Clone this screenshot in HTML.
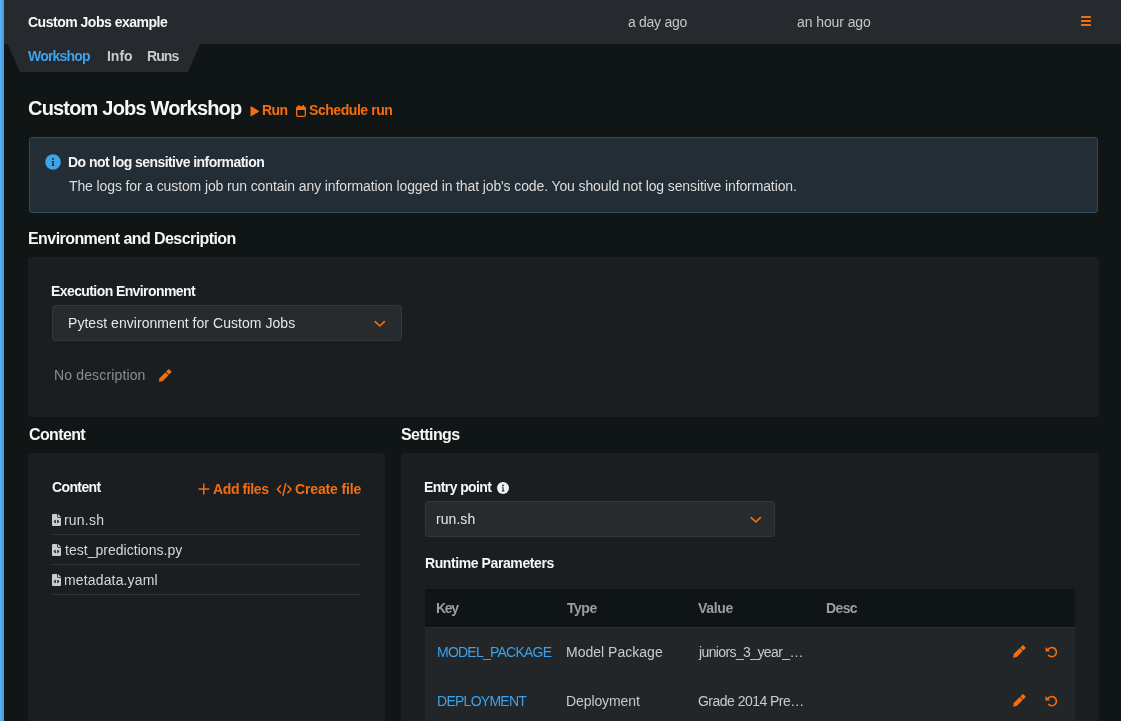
<!DOCTYPE html>
<html><head><meta charset="utf-8"><style>
*{margin:0;padding:0;box-sizing:border-box}
html,body{width:1121px;height:721px;overflow:hidden;background:#101516;font-family:"Liberation Sans",sans-serif;color:#fff}
.t{position:absolute;white-space:nowrap;line-height:normal;will-change:transform}
.abs{position:absolute}
.b{font-weight:bold}
</style></head><body>
<div class="abs" style="left:0;top:0;width:4px;height:721px;background:linear-gradient(to right,#66b7f1,#46a4ea 45%,#3e9fe7)"></div>
<div class="abs" style="left:4px;top:0;width:1117px;height:44px;background:#262a2e"></div>
<div class="abs" style="left:4px;top:44px;width:200px;height:28px;background:#262a2e;clip-path:polygon(3.5px 0,196px 0,184px 28px,16px 28px)"></div>
<svg class="abs" style="left:1081px;top:16px" width="10" height="10"><rect x="0" y="0" width="10" height="2" rx="0.6" fill="#f46d0e"/><rect x="0" y="4" width="10" height="2" rx="0.6" fill="#f46d0e"/><rect x="0" y="8" width="10" height="2" rx="0.6" fill="#f46d0e"/></svg>
<svg class="abs" style="left:250px;top:106px" width="10" height="11"><path d="M0.5 1.2 Q0.5 0 1.6 0.6 L8.6 4.7 Q9.5 5.3 8.6 5.9 L1.6 10 Q0.5 10.6 0.5 9.4 Z" fill="#f46d0e"/></svg>
<svg class="abs" style="left:296px;top:105px" width="11" height="12"><path d="M2.7 0.3 v2.2 M7.3 0.3 v2.2" stroke="#f46d0e" stroke-width="1.5" stroke-linecap="round"/><rect x="0.65" y="1.9" width="8.7" height="9.45" rx="1.4" fill="none" stroke="#f46d0e" stroke-width="1.3"/><rect x="0.65" y="1.9" width="8.7" height="3" rx="1" fill="#f46d0e"/></svg>
<div class="abs" style="left:29px;top:137px;width:1069px;height:76px;background:#232d35;border:1px solid #2b4b62;border-radius:3px"></div>
<svg class="abs" style="left:45px;top:154px" width="16" height="16"><circle cx="8" cy="8" r="7.8" fill="#3fa3ea"/><circle cx="8" cy="4.9" r="0.95" fill="#11181d"/><path d="M6.9 7 H8.6 V10.9 H9.4 V11.8 H6.6 V10.9 H7.4 V7.8 H6.9Z" fill="#11181d"/></svg>
<div class="abs" style="left:28px;top:257px;width:1071px;height:160px;background:#1b1e20;border-radius:3px"></div>
<div class="abs" style="left:52px;top:305px;width:350px;height:36px;background:#272b2e;border:1px solid #32373a;border-radius:3px"></div>
<svg class="abs" style="left:374px;top:319px" width="12" height="10"><path d="M1.2 2.6 L5.8 7 L10.4 2.6" fill="none" stroke="#f46d0e" stroke-width="1.7" stroke-linecap="round" stroke-linejoin="round"/></svg>
<svg class="abs" style="left:157px;top:369px" width="15" height="15"><g transform="translate(1.9,12.8) rotate(-45)"><path d="M0 0 L3 -2.15 H11.5 V2.15 H3Z" fill="#f46d0e"/><rect x="12.2" y="-2.15" width="3.9" height="4.3" rx="0.9" fill="#f46d0e"/></g></svg>
<div class="abs" style="left:28px;top:453px;width:357px;height:278px;background:#1b1e20;border-radius:3px"></div>
<svg class="abs" style="left:198px;top:483px" width="12" height="12"><path d="M5.8 1 V11 M1 5.9 H10.8" stroke="#f46d0e" stroke-width="1.5" stroke-linecap="round"/></svg>
<svg class="abs" style="left:276px;top:483px" width="17" height="13"><path d="M4.6 2.8 L1.4 6.3 L4.6 9.8 M11.8 2.8 L15 6.3 L11.8 9.8 M9.7 0.6 L7.1 12.2" fill="none" stroke="#f46d0e" stroke-width="1.5" stroke-linecap="round" stroke-linejoin="round"/></svg>
<svg class="abs" style="left:52px;top:514px" width="9" height="12"><path d="M1 0 H5.2 V2.8 Q5.2 3.8 6.2 3.8 H9 V11 Q9 12 8 12 H1 Q0 12 0 11 V1 Q0 0 1 0Z M6 0 L9 3 H6Z" fill="#c9cbcc"/><path d="M3.7 6.3 L2.5 7.5 L3.7 8.7 M5.3 6.3 L6.5 7.5 L5.3 8.7" fill="none" stroke="#1b1e20" stroke-width="1.3"/></svg>
<div class="abs" style="left:52px;top:534px;width:309px;height:1px;background:#303336"></div>
<svg class="abs" style="left:52px;top:544px" width="9" height="12"><path d="M1 0 H5.2 V2.8 Q5.2 3.8 6.2 3.8 H9 V11 Q9 12 8 12 H1 Q0 12 0 11 V1 Q0 0 1 0Z M6 0 L9 3 H6Z" fill="#c9cbcc"/><path d="M3.7 6.3 L2.5 7.5 L3.7 8.7 M5.3 6.3 L6.5 7.5 L5.3 8.7" fill="none" stroke="#1b1e20" stroke-width="1.3"/></svg>
<div class="abs" style="left:52px;top:564px;width:309px;height:1px;background:#303336"></div>
<svg class="abs" style="left:52px;top:574px" width="9" height="12"><path d="M1 0 H5.2 V2.8 Q5.2 3.8 6.2 3.8 H9 V11 Q9 12 8 12 H1 Q0 12 0 11 V1 Q0 0 1 0Z M6 0 L9 3 H6Z" fill="#c9cbcc"/><path d="M3.7 6.3 L2.5 7.5 L3.7 8.7 M5.3 6.3 L6.5 7.5 L5.3 8.7" fill="none" stroke="#1b1e20" stroke-width="1.3"/></svg>
<div class="abs" style="left:52px;top:594px;width:309px;height:1px;background:#303336"></div>
<div class="abs" style="left:401px;top:453px;width:698px;height:278px;background:#1b1e20;border-radius:3px"></div>
<svg class="abs" style="left:497px;top:482px" width="12" height="12"><circle cx="6" cy="6" r="6" fill="#f2f2f2"/><circle cx="6" cy="3.4" r="0.9" fill="#1b1e20"/><path d="M4.9 5.2 H6.6 V8.6 H7.4 V9.4 H4.8 V8.6 H5.5 V6 H4.9Z" fill="#1b1e20"/></svg>
<div class="abs" style="left:425px;top:501px;width:350px;height:36px;background:#272b2e;border:1px solid #32373a;border-radius:3px"></div>
<svg class="abs" style="left:750px;top:515px" width="12" height="10"><path d="M1.2 2.6 L5.8 7 L10.4 2.6" fill="none" stroke="#f46d0e" stroke-width="1.7" stroke-linecap="round" stroke-linejoin="round"/></svg>
<div class="abs" style="left:425px;top:589px;width:650px;height:38px;background:#0f1415"></div>
<div class="abs" style="left:425px;top:627px;width:650px;height:94px;background:#222629;border-top:1px solid #2a2e31"></div>
<svg class="abs" style="left:1011px;top:645px" width="15" height="15"><g transform="translate(2.1,12.7) rotate(-45)"><path d="M0 0 L3 -2.15 H11.5 V2.15 H3Z" fill="#f46d0e"/><rect x="12.2" y="-2.15" width="3.9" height="4.3" rx="0.9" fill="#f46d0e"/></g></svg>
<svg class="abs" style="left:1045px;top:646px" width="13" height="12"><path d="M2.6 4.2 A4.6 4.6 0 1 1 3.2 9" fill="none" stroke="#f46d0e" stroke-width="1.6"/><path d="M0.5 1 V5.5 H5Z" fill="#f46d0e"/></svg>
<svg class="abs" style="left:1011px;top:694px" width="15" height="15"><g transform="translate(2.1,12.7) rotate(-45)"><path d="M0 0 L3 -2.15 H11.5 V2.15 H3Z" fill="#f46d0e"/><rect x="12.2" y="-2.15" width="3.9" height="4.3" rx="0.9" fill="#f46d0e"/></g></svg>
<svg class="abs" style="left:1045px;top:695px" width="13" height="12"><path d="M2.6 4.2 A4.6 4.6 0 1 1 3.2 9" fill="none" stroke="#f46d0e" stroke-width="1.6"/><path d="M0.5 1 V5.5 H5Z" fill="#f46d0e"/></svg>

<div class="t b" id="t0" style="left:28.20px;top:14px;font-size:14px;color:#f7f7f7;letter-spacing:-0.489px">Custom Jobs example</div>
<div class="t" id="t1" style="left:628.20px;top:14px;font-size:14px;color:#c4c6c8;letter-spacing:-0.288px">a day ago</div>
<div class="t" id="t2" style="left:797.00px;top:14px;font-size:14px;color:#c4c6c8;letter-spacing:-0.090px">an hour ago</div>
<div class="t b" id="t3" style="left:28.20px;top:48px;font-size:14px;color:#3ea2ea;letter-spacing:-0.800px">Workshop</div>
<div class="t b" id="t4" style="left:106.80px;top:48px;font-size:14px;color:#c9cacb;letter-spacing:-0.033px">Info</div>
<div class="t b" id="t5" style="left:147.20px;top:48px;font-size:14px;color:#c9cacb;letter-spacing:-0.933px">Runs</div>
<div class="t b" id="t6" style="left:27.60px;top:97px;font-size:20px;color:#f7f7f7;letter-spacing:-0.811px">Custom Jobs Workshop</div>
<div class="t b" id="t7" style="left:262.00px;top:102px;font-size:14px;color:#f46d0e;letter-spacing:-0.550px">Run</div>
<div class="t b" id="t8" style="left:309.20px;top:102px;font-size:14px;color:#f46d0e;letter-spacing:-0.445px">Schedule run</div>
<div class="t b" id="t9" style="left:68.40px;top:154px;font-size:14px;color:#f4f4f4;letter-spacing:-0.555px">Do not log sensitive information</div>
<div class="t" id="t10" style="left:69.40px;top:178px;font-size:14px;color:#dcdddd;letter-spacing:-0.117px">The logs for a custom job run contain any information logged in that job&#39;s code. You should not log sensitive information.</div>
<div class="t b" id="t11" style="left:28.00px;top:230px;font-size:16px;color:#f7f7f7;letter-spacing:-0.569px">Environment and Description</div>
<div class="t b" id="t12" style="left:51.00px;top:283px;font-size:14px;color:#f7f7f7;letter-spacing:-0.590px">Execution Environment</div>
<div class="t" id="t13" style="left:67.60px;top:315px;font-size:14px;color:#e6e7e7;letter-spacing:0.045px">Pytest environment for Custom Jobs</div>
<div class="t" id="t14" style="left:53.60px;top:367px;font-size:14px;color:#8b8d8f;letter-spacing:0.146px">No description</div>
<div class="t b" id="t15" style="left:28.50px;top:426px;font-size:16px;color:#f7f7f7;letter-spacing:-0.625px">Content</div>
<div class="t b" id="t16" style="left:52.00px;top:479px;font-size:14px;color:#f7f7f7;letter-spacing:-0.625px">Content</div>
<div class="t b" id="t17" style="left:213.20px;top:481px;font-size:14px;color:#f46d0e;letter-spacing:-0.387px">Add files</div>
<div class="t b" id="t18" style="left:295.00px;top:481px;font-size:14px;color:#f46d0e;letter-spacing:-0.150px">Create file</div>
<div class="t" id="t19" style="left:64.40px;top:512px;font-size:14px;color:#d6d7d8;letter-spacing:0.210px">run.sh</div>
<div class="t" id="t20" style="left:65.00px;top:542px;font-size:14px;color:#d6d7d8;letter-spacing:0.028px">test_predictions.py</div>
<div class="t" id="t21" style="left:64.40px;top:572px;font-size:14px;color:#d6d7d8;letter-spacing:0.150px">metadata.yaml</div>
<div class="t b" id="t22" style="left:401.00px;top:426px;font-size:16px;color:#f7f7f7;letter-spacing:-0.557px">Settings</div>
<div class="t b" id="t23" style="left:424.00px;top:479px;font-size:14px;color:#f7f7f7;letter-spacing:-0.590px">Entry point</div>
<div class="t" id="t24" style="left:436.40px;top:511px;font-size:14px;color:#e6e7e7;letter-spacing:0.060px">run.sh</div>
<div class="t b" id="t25" style="left:424.50px;top:555px;font-size:14px;color:#f7f7f7;letter-spacing:-0.409px">Runtime Parameters</div>
<div class="t b" id="t26" style="left:436.20px;top:600px;font-size:14px;color:#9c9ea0;letter-spacing:-1.300px">Key</div>
<div class="t b" id="t27" style="left:567.40px;top:600px;font-size:14px;color:#9c9ea0;letter-spacing:-0.467px">Type</div>
<div class="t b" id="t28" style="left:697.80px;top:600px;font-size:14px;color:#9c9ea0;letter-spacing:-0.350px">Value</div>
<div class="t b" id="t29" style="left:826.40px;top:600px;font-size:14px;color:#9c9ea0;letter-spacing:-0.633px">Desc</div>
<div class="t" id="t30" style="left:436.80px;top:644px;font-size:14px;color:#3ea2ea;letter-spacing:-0.767px">MODEL_PACKAGE</div>
<div class="t" id="t31" style="left:566.40px;top:644px;font-size:14px;color:#c9cacb;letter-spacing:0.017px">Model Package</div>
<div class="t" id="t32" style="left:698.80px;top:644px;font-size:14px;color:#c9cacb;letter-spacing:-0.613px">juniors_3_year_…</div>
<div class="t" id="t33" style="left:436.80px;top:693px;font-size:14px;color:#3ea2ea;letter-spacing:-0.733px">DEPLOYMENT</div>
<div class="t" id="t34" style="left:566.40px;top:693px;font-size:14px;color:#c9cacb;letter-spacing:-0.100px">Deployment</div>
<div class="t" id="t35" style="left:697.80px;top:693px;font-size:14px;color:#c9cacb;letter-spacing:-0.529px">Grade 2014 Pre…</div>
</body></html>
